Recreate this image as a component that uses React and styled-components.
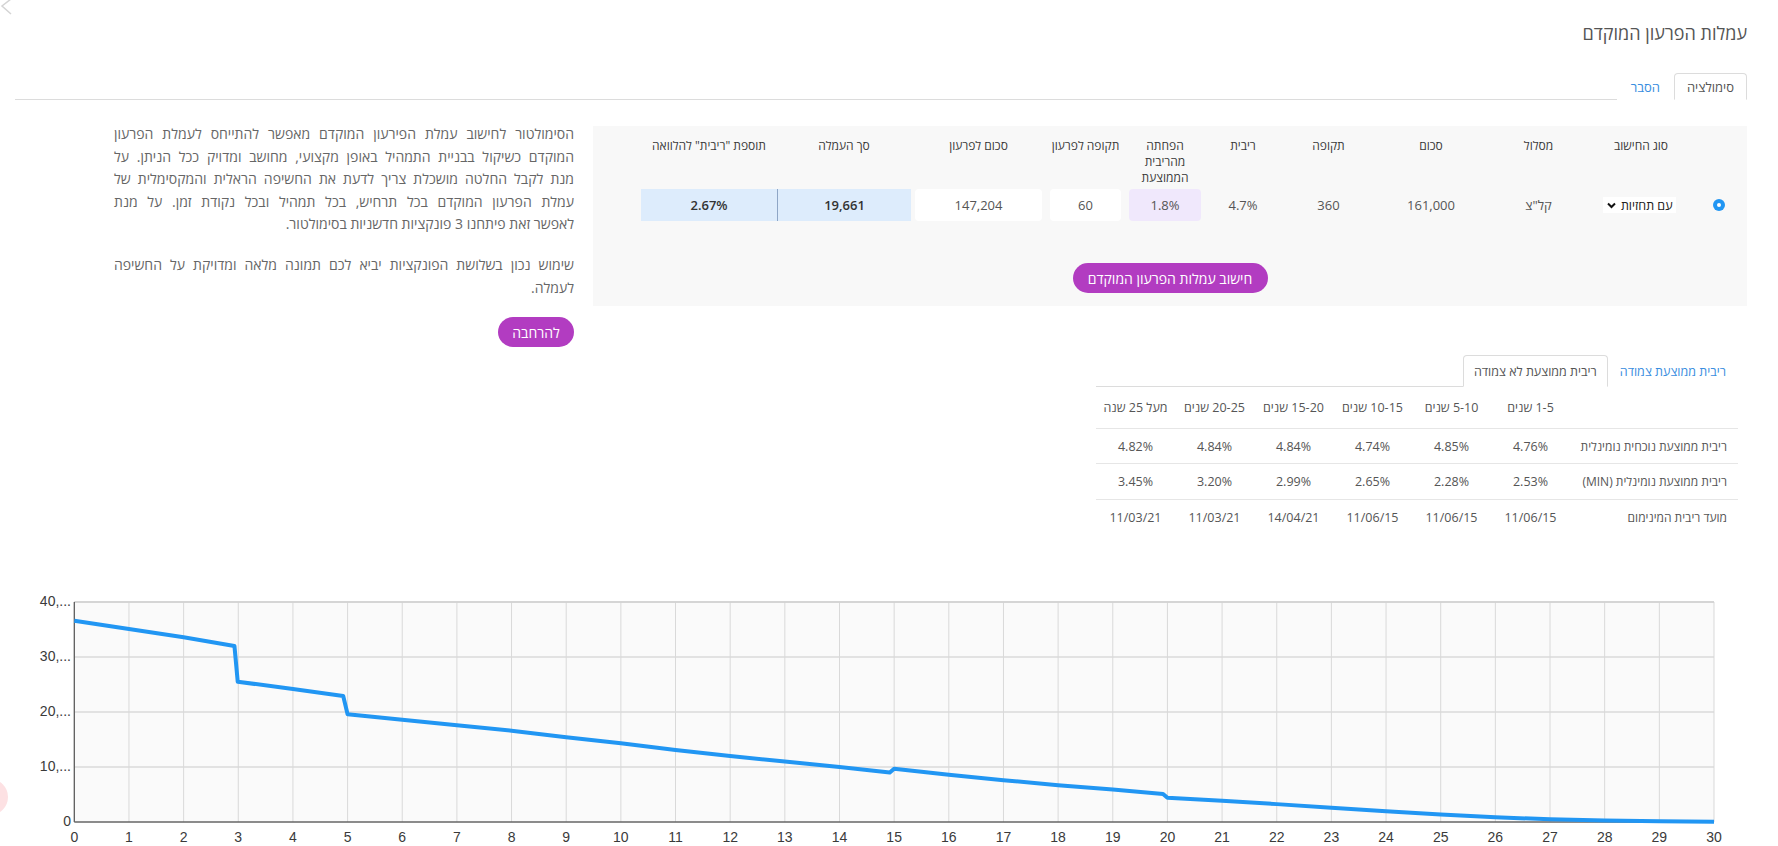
import React from 'react';
import styled, { createGlobalStyle } from 'styled-components';

const GlobalStyle = createGlobalStyle`
  html, body {
    margin: 0;
    padding: 0;
    background: #fff;
    overflow: hidden;
  }
  body {
    font-family: 'Open Sans', 'Liberation Sans', sans-serif;
    direction: rtl;
    color: #555;
  }
  * {
    box-sizing: border-box;
  }
`;

const SIM_COLS = '56px 100px 105px 110px 95px 76px 80px 79px 135px 134px 136px';
const RATE_COLS = '168px repeat(6, 79px)';

const introLines = [
	'הסימולטור לחישוב עמלת הפירעון המוקדם מאפשר להתייחס לעמלת הפרעון',
	'המוקדם כשיקול בבניית התמהיל באופן מקצועי, מחושב ומדויק ככל הניתן. על',
	'מנת לקבל החלטה מושכלת צריך לדעת את החשיפה הראלית והמקסימלית של',
	'עמלת הפרעון המוקדם בכל תרחיש, בכל תמהיל ובכל נקודת זמן. על מנת',
	'לאפשר זאת פיתחנו 3 פונקציות חדשניות בסימולטור.',
];

const usageLines = ['שימוש נכון בשלושת הפונקציות יביא לכם תמונה מלאה ומדויקת על החשיפה', 'לעמלה.'];

const rateHeaders = ['1-5 שנים', '5-10 שנים', '10-15 שנים', '15-20 שנים', '20-25 שנים', 'מעל 25 שנה'];

const rateRows = [
	{ label: 'ריבית ממוצעת נוכחית נומינלית', values: ['4.76%', '4.85%', '4.74%', '4.84%', '4.84%', '4.82%'] },
	{ label: 'ריבית ממוצעת נומינלית (MIN)', values: ['2.53%', '2.28%', '2.65%', '2.99%', '3.20%', '3.45%'] },
	{ label: 'מועד ריבית המינימום', values: ['11/06/15', '11/06/15', '11/06/15', '14/04/21', '11/03/21', '11/03/21'] },
];

// balance curve, [year, thousands]
const balance = [
	[0, 36.6], [1, 35.1], [2, 33.6], [2.93, 32.0], [2.99, 25.5], [4, 24.2], [4.92, 22.9], [5, 19.6],
	[6, 18.6], [7, 17.6], [8, 16.6], [9, 15.4], [10, 14.3], [11, 13.1], [12, 12.0], [13, 11.0],
	[14, 10.0], [14.92, 9.0], [15, 9.7], [16, 8.6], [17, 7.6], [18, 6.7], [19, 5.9], [19.92, 5.1],
	[20, 4.4], [21, 3.85], [22, 3.25], [23, 2.6], [24, 1.95], [25, 1.35], [26, 0.85], [27, 0.5],
	[28, 0.27], [29, 0.12], [30, 0.06],
];

const PLOT = { left: 74.3, right: 1714, top: 22, bottom: 242 };
const xOf = (year) => PLOT.left + (year * (PLOT.right - PLOT.left)) / 30;
const yOf = (v) => PLOT.bottom - (v * (PLOT.bottom - PLOT.top)) / 40;

const App = () => (
	<>
		<GlobalStyle />
		<BackArrow width="14" height="18" viewBox="0 0 14 18">
			<path d="M11 -1 L2 6 L11 14" fill="none" stroke="#d4d4d4" strokeWidth="1.5" />
		</BackArrow>
		<HelpBubble />

		<Page>
			<Title>עמלות הפרעון המוקדם</Title>
			<TabBar $height={27}>
				<Tab $active $pad={12}>סימולציה</Tab>
				<Tab $pad={13}>הסבר</Tab>
			</TabBar>

			<Content>
				<RightColumn>
					<SimPanel>
						<SimRow $height={48}>
							<HeadCell />
							<HeadCell>סוג החישוב</HeadCell>
							<HeadCell>מסלול</HeadCell>
							<HeadCell>סכום</HeadCell>
							<HeadCell>תקופה</HeadCell>
							<HeadCell>ריבית</HeadCell>
							<HeadCell>
								הפחתה
								<br />
								מהריבית
								<br />
								הממוצעת
							</HeadCell>
							<HeadCell>תקופה לפרעון</HeadCell>
							<HeadCell>סכום לפרעון</HeadCell>
							<HeadCell>סך העמלה</HeadCell>
							<HeadCell>תוספת "ריבית" להלוואה</HeadCell>
						</SimRow>
						<SimRow $height={32} $gapTop={3}>
							<ValueCell>
								<Radio />
							</ValueCell>
							<ValueCell>
								<SelectBox>
									<span>עם תחזיות</span>
									<svg width="9" height="7" viewBox="0 0 9 7">
										<path d="M1 1.5 L4.5 5 L8 1.5" fill="none" stroke="#111" strokeWidth="2" />
									</svg>
								</SelectBox>
							</ValueCell>
							<ValueCell>קל"צ</ValueCell>
							<ValueCell>161,000</ValueCell>
							<ValueCell>360</ValueCell>
							<ValueCell>4.7%</ValueCell>
							<ValueCell $pad={4}>
								<ValueBox $tone="lavender">1.8%</ValueBox>
							</ValueCell>
							<ValueCell $pad={4}>
								<ValueBox>60</ValueBox>
							</ValueCell>
							<ValueCell $pad={4}>
								<ValueBox>147,204</ValueBox>
							</ValueCell>
							<ValueCell>
								<ValueBox $tone="result" $divider>19,661</ValueBox>
							</ValueCell>
							<ValueCell>
								<ValueBox $tone="result">2.67%</ValueBox>
							</ValueCell>
						</SimRow>
						<PillButton $width={195}>חישוב עמלות הפרעון המוקדם</PillButton>
					</SimPanel>

					<RatesBlock>
						<TabBar $height={32}>
							<Tab $pad={11} $size={12.5}>ריבית ממוצעת צמודה</Tab>
							<Tab $active $pad={10} $size={12.5}>ריבית ממוצעת לא צמודה</Tab>
						</TabBar>
						<RatesRow $height={41}>
							<RateLabel />
							{rateHeaders.map((h) => (
								<RateCell key={h}>{h}</RateCell>
							))}
						</RatesRow>
						{rateRows.map((row, i) => (
							<RatesRow key={row.label} $height={i === 0 ? 35 : 36} $lined>
								<RateLabel>{row.label}</RateLabel>
								{row.values.map((v, j) => (
									<RateCell key={j}>{v}</RateCell>
								))}
							</RatesRow>
						))}
					</RatesBlock>
				</RightColumn>

				<IntroColumn>
					<Paragraph>
						{introLines.map((line, i) => (
							<Line key={i} $last={i === introLines.length - 1}>
								{line}
							</Line>
						))}
					</Paragraph>
					<Paragraph>
						{usageLines.map((line, i) => (
							<Line key={i} $last={i === usageLines.length - 1}>
								{line}
							</Line>
						))}
					</Paragraph>
					<PillButton $width={76}>להרחבה</PillButton>
				</IntroColumn>
			</Content>
		</Page>

		<ChartSvg width="1778" height="266" viewBox="0 0 1778 266">
			<rect
				x={PLOT.left}
				y={PLOT.top}
				width={PLOT.right - PLOT.left}
				height={PLOT.bottom - PLOT.top}
				fill="#fafafa"
			/>
			{[0, 1, 2, 3].map((i) => (
				<line
					key={`h${i}`}
					x1={PLOT.left}
					x2={PLOT.right}
					y1={yOf(10 * (i + 1))}
					y2={yOf(10 * (i + 1))}
					stroke="#e2e2e2"
					strokeWidth="2"
				/>
			))}
			{Array.from({ length: 31 }, (_, i) => (
				<line key={`v${i}`} x1={xOf(i)} x2={xOf(i)} y1={PLOT.top} y2={PLOT.bottom} stroke="#d9d9d9" strokeWidth="1" />
			))}
			<line x1={PLOT.left} x2={PLOT.right} y1={PLOT.top} y2={PLOT.top} stroke="#d0d0d0" strokeWidth="1.5" />
			<line x1={PLOT.left} x2={PLOT.left} y1={PLOT.top} y2={PLOT.bottom} stroke="#555" strokeWidth="1.2" />
			<line x1={PLOT.left} x2={PLOT.right} y1={PLOT.bottom} y2={PLOT.bottom} stroke="#666" strokeWidth="1.5" />
			{['0', '10,...', '20,...', '30,...', '40,...'].map((t, i) => (
				<AxisText key={t} x="71" y={yOf(i * 10)} textAnchor="end" dominantBaseline="middle">
					{t}
				</AxisText>
			))}
			{Array.from({ length: 31 }, (_, i) => (
				<AxisText key={`x${i}`} x={xOf(i)} y="258" textAnchor="middle" dominantBaseline="middle">
					{i}
				</AxisText>
			))}
			<polyline
				points={balance.map(([yr, v]) => `${xOf(yr)},${yOf(v)}`).join(' ')}
				fill="none"
				stroke="#2196f3"
				strokeWidth="4"
				strokeLinejoin="round"
			/>
		</ChartSvg>
	</>
);

const BackArrow = styled.svg`
	position: absolute;
	top: 0;
	left: 0;
`;

// floating help button, mostly outside the viewport
const HelpBubble = styled.div`
	position: absolute;
	left: 0;
	top: 779px;
	width: 8px;
	height: 36px;
	overflow: hidden;

	&::before {
		content: '';
		position: absolute;
		left: -28px;
		top: 0;
		width: 36px;
		height: 36px;
		border-radius: 50%;
		background: #fde1e3;
	}
`;

const Page = styled.div`
	padding: 0 31px 0 15px;
`;

const Title = styled.h1`
	margin: 0 0 28px;
	padding-top: 21px;
	font-size: 18px;
	line-height: 24px;
	font-weight: 400;
	color: #555;
`;

const TabBar = styled.div`
	display: flex;
	align-items: stretch;
	height: ${({ $height }) => $height}px;
	border-bottom: 1px solid #dcdcdc;
`;

const Tab = styled.div`
	display: flex;
	align-items: center;
	padding: 0 ${({ $pad }) => $pad}px;
	margin-bottom: -1px;
	font-size: ${({ $size }) => $size || 13}px;
	color: ${({ $active }) => ($active ? '#555' : '#3a8ee0')};
	background: #fff;
	border: 1px solid ${({ $active }) => ($active ? '#dcdcdc' : 'transparent')};
	border-bottom-color: ${({ $active }) => ($active ? '#fff' : 'transparent')};
	border-radius: 4px 4px 0 0;
	cursor: pointer;
`;

const Content = styled.div`
	display: flex;
	align-items: flex-start;
	gap: 19px;
	padding-top: 23px;
`;

const RightColumn = styled.div`
	display: flex;
	flex-direction: column;
	align-items: flex-start;
	width: 1154px;
	margin-top: 3px;
`;

const SimPanel = styled.div`
	width: 100%;
	padding: 12px 0 13px;
	background: #f8f8f8;
`;

const SimRow = styled.div`
	display: grid;
	grid-template-columns: ${SIM_COLS};
	height: ${({ $height }) => $height}px;
	margin-top: ${({ $gapTop }) => $gapTop || 0}px;
`;

const HeadCell = styled.div`
	text-align: center;
	font-size: 12px;
	line-height: 16px;
	font-weight: 500;
	color: #3a3a3a;
`;

const ValueCell = styled.div`
	display: flex;
	align-items: center;
	justify-content: center;
	padding: 0 ${({ $pad }) => $pad || 0}px;
	font-size: 13px;
	color: #555;
`;

const toneBg = {
	white: '#fff',
	lavender: '#f0e8fc',
	result: '#ddecfc',
};

const ValueBox = styled.div`
	display: flex;
	align-items: center;
	justify-content: center;
	width: 100%;
	height: 100%;
	background: ${({ $tone }) => toneBg[$tone || 'white']};
	border-radius: ${({ $tone }) => ($tone === 'result' ? 0 : 4)}px;
	border-left: ${({ $divider }) => ($divider ? '1px solid #8ea6c6' : 'none')};
	font-weight: ${({ $tone }) => ($tone === 'result' ? 600 : 400)};
	color: ${({ $tone }) => ($tone === 'result' ? '#333' : '#555')};
`;

const Radio = styled.span`
	display: inline-flex;
	align-items: center;
	justify-content: center;
	width: 12px;
	height: 12px;
	border-radius: 50%;
	background: #2196f3;

	&::after {
		content: '';
		width: 4px;
		height: 4px;
		border-radius: 50%;
		background: #fff;
	}
`;

const SelectBox = styled.div`
	display: flex;
	align-items: center;
	justify-content: space-between;
	width: 73px;
	height: 16px;
	padding: 0 3px 0 4px;
	background: #fff;
	font-size: 12.5px;
	color: #222;
	margin-right: 4px;
`;

const PillButton = styled.button`
	display: block;
	width: ${({ $width }) => $width}px;
	height: 30px;
	margin: 0 auto;
	padding: 0;
	border: none;
	border-radius: 15px;
	background: #b23cc1;
	color: #fff;
	font-family: inherit;
	font-size: 14px;
	cursor: pointer;

	${SimPanel} & {
		margin-top: 42px;
	}
`;

const RatesBlock = styled.div`
	width: 642px;
	margin-top: 49px;
	margin-right: 9px;
`;

const RatesRow = styled.div`
	display: grid;
	grid-template-columns: ${RATE_COLS};
	align-items: center;
	height: ${({ $height }) => $height}px;
	border-top: ${({ $lined }) => ($lined ? '1px solid #e6e6e6' : 'none')};
`;

const RateLabel = styled.div`
	padding-right: 11px;
	font-size: 12px;
	color: #555;
	text-align: right;
	white-space: nowrap;
`;

const RateCell = styled.div`
	text-align: center;
	font-size: 12.5px;
	color: #555;
	white-space: nowrap;
`;

const IntroColumn = styled.div`
	width: 460px;

	${PillButton} {
		margin: 0;
	}
`;

const Paragraph = styled.p`
	margin: 0 0 18px;
	font-size: 14px;
	line-height: 22.6px;
	color: #666;
`;

const Line = styled.span`
	display: block;
	text-align: ${({ $last }) => ($last ? 'right' : 'justify')};
	text-align-last: ${({ $last }) => ($last ? 'right' : 'justify')};
	white-space: nowrap;
`;

const ChartSvg = styled.svg`
	display: block;
	direction: ltr;
	margin-top: 45px;
`;

const AxisText = styled.text`
	font-family: 'Liberation Sans', Arial, sans-serif;
	font-size: 14px;
	fill: #3a3a3a;
`;

export default App;
